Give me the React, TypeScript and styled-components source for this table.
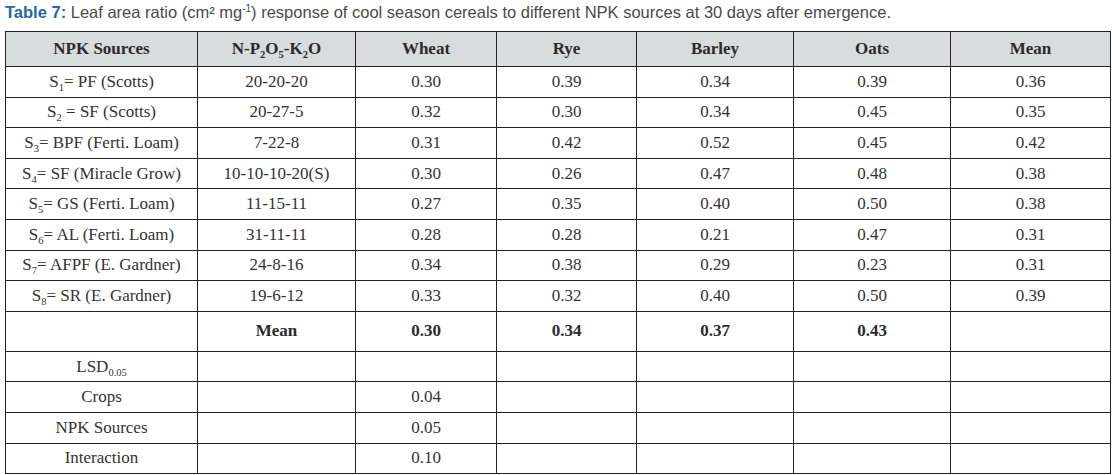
import React from 'react';
import styled, { createGlobalStyle } from 'styled-components';

const GlobalStyle = createGlobalStyle`
  html, body {
    margin: 0;
    padding: 0;
    background: #ffffff;
  }
`;

const Page = styled.div`
  padding: 1px 2px 0 5px;
  box-sizing: border-box;
  width: 1112px;
`;

const Caption = styled.div`
  font-family: 'Liberation Sans', Arial, sans-serif;
  font-size: 16.5px;
  color: #4a4a4a;
  line-height: 22px;
  height: 30px;
`;

const CaptionLabel = styled.span`
  color: #2467ad;
  font-weight: bold;
`;

const Sup = styled.sup`
  font-size: 10px;
  line-height: 0;
`;

const Table = styled.table`
  border-collapse: collapse;
  width: 1105px;
  table-layout: fixed;
  font-family: 'Liberation Serif', 'Times New Roman', serif;
  font-size: 17px;
  color: #333333;
`;

const HeadRow = styled.tr`
  background: #d7dcdc;
  height: 35px;
`;

const Row = styled.tr<{ $tall?: boolean }>`
  height: ${(p) => (p.$tall ? '40px' : '30.6px')};
`;

const HeadCell = styled.th`
  border: 1px solid #222222;
  font-weight: bold;
  text-align: center;
  padding: 0;
  color: #2b2b2b;
`;

const Cell = styled.td<{ $bold?: boolean }>`
  border: 1px solid #222222;
  text-align: center;
  padding: 0;
  font-weight: ${(p) => (p.$bold ? 'bold' : 'normal')};
  color: ${(p) => (p.$bold ? '#2b2b2b' : '#333333')};
`;

const Sub = styled.sub`
  font-size: 10.5px;
  vertical-align: -4px;
  line-height: 0;
`;

const columns = [192, 158, 141, 140, 157, 157, 160];

const rows = [
  { s: '1', gap: '= ', name: 'PF (Scotts)', npk: '20-20-20', v: ['0.30', '0.39', '0.34', '0.39', '0.36'] },
  { s: '2', gap: ' = ', name: 'SF (Scotts)', npk: '20-27-5', v: ['0.32', '0.30', '0.34', '0.45', '0.35'] },
  { s: '3', gap: '= ', name: 'BPF (Ferti. Loam)', npk: '7-22-8', v: ['0.31', '0.42', '0.52', '0.45', '0.42'] },
  { s: '4', gap: '= ', name: 'SF (Miracle Grow)', npk: '10-10-10-20(S)', v: ['0.30', '0.26', '0.47', '0.48', '0.38'] },
  { s: '5', gap: '= ', name: 'GS (Ferti. Loam)', npk: '11-15-11', v: ['0.27', '0.35', '0.40', '0.50', '0.38'] },
  { s: '6', gap: '= ', name: 'AL (Ferti. Loam)', npk: '31-11-11', v: ['0.28', '0.28', '0.21', '0.47', '0.31'] },
  { s: '7', gap: '= ', name: 'AFPF (E. Gardner)', npk: '24-8-16', v: ['0.34', '0.38', '0.29', '0.23', '0.31'] },
  { s: '8', gap: '= ', name: 'SR (E. Gardner)', npk: '19-6-12', v: ['0.33', '0.32', '0.40', '0.50', '0.39'] },
];

const lsd = [
  { label: 'Crops', value: '0.04' },
  { label: 'NPK Sources', value: '0.05' },
  { label: 'Interaction', value: '0.10' },
];

const App = () => {
  return (
    <Page>
      <GlobalStyle />
      <Caption>
        <CaptionLabel>Table 7:</CaptionLabel> Leaf area ratio (cm² mg<Sup>-1</Sup>) response of cool season
        cereals to different NPK sources at 30 days after emergence.
      </Caption>
      <Table>
        <colgroup>
          {columns.map((w, i) => (
            <col key={i} style={{ width: w }} />
          ))}
        </colgroup>
        <thead>
          <HeadRow>
            <HeadCell>NPK Sources</HeadCell>
            <HeadCell>
              N-P<Sub>2</Sub>O<Sub>5</Sub>-K<Sub>2</Sub>O
            </HeadCell>
            <HeadCell>Wheat</HeadCell>
            <HeadCell>Rye</HeadCell>
            <HeadCell>Barley</HeadCell>
            <HeadCell>Oats</HeadCell>
            <HeadCell>Mean</HeadCell>
          </HeadRow>
        </thead>
        <tbody>
          {rows.map((r) => (
            <Row key={r.s}>
              <Cell>
                S<Sub>{r.s}</Sub>
                {r.gap}
                {r.name}
              </Cell>
              <Cell>{r.npk}</Cell>
              {r.v.map((v, i) => (
                <Cell key={i}>{v}</Cell>
              ))}
            </Row>
          ))}
          <Row $tall>
            <Cell />
            <Cell $bold>Mean</Cell>
            <Cell $bold>0.30</Cell>
            <Cell $bold>0.34</Cell>
            <Cell $bold>0.37</Cell>
            <Cell $bold>0.43</Cell>
            <Cell />
          </Row>
          <Row>
            <Cell>
              LSD<Sub>0.05</Sub>
            </Cell>
            <Cell />
            <Cell />
            <Cell />
            <Cell />
            <Cell />
            <Cell />
          </Row>
          {lsd.map((l) => (
            <Row key={l.label}>
              <Cell>{l.label}</Cell>
              <Cell />
              <Cell>{l.value}</Cell>
              <Cell />
              <Cell />
              <Cell />
              <Cell />
            </Row>
          ))}
        </tbody>
      </Table>
    </Page>
  );
};

export default App;
